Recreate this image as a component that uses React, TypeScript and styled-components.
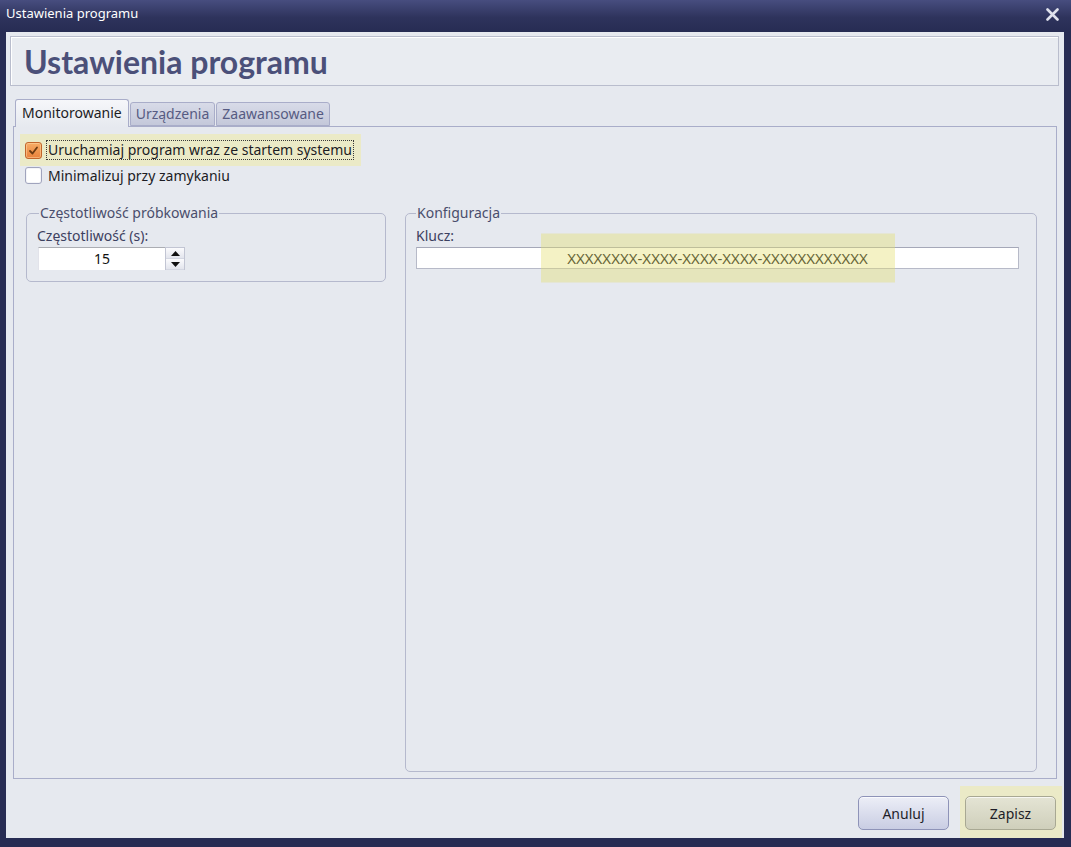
import styled, { createGlobalStyle } from "styled-components";

const GlobalStyle = createGlobalStyle`
  html, body {
    margin: 0;
    padding: 0;
  }
  body {
    font-family: "Noto Sans", "Open Sans", sans-serif;
    font-size: 14px;
    color: #1c1c24;
  }
`;

const Window = styled.div`
  width: 1071px;
  height: 847px;
  box-sizing: border-box;
  display: flex;
  flex-direction: column;
  background: #272c53;
  padding: 0 7px 9px 6px;
  overflow: hidden;
`;

const TitleBar = styled.div`
  height: 32px;
  margin: 0 -7px 0 -6px;
  padding: 4px 12px 0 6px;
  box-sizing: border-box;
  display: flex;
  justify-content: space-between;
  align-items: flex-start;
  background: linear-gradient(#474d7f, #2e335c 55%, #272c53);
  color: #ffffff;
  font-size: 13px;
  line-height: 18px;
`;

const CloseButton = styled.button`
  border: none;
  background: transparent;
  padding: 0;
  margin-top: 3px;
  width: 14px;
  height: 14px;
  display: grid;
  place-items: center;
`;

const Body = styled.div`
  flex: 1;
  display: flex;
  flex-direction: column;
  background: #e6e9ef;
`;

const Header = styled.div`
  margin: 4px 5px 0 4px;
  height: 50px;
  box-sizing: border-box;
  border: 1px solid #b9bdcd;
  background: #e9ecf1;
  box-shadow: inset 1px 1px 0 #ffffff;
  display: flex;
  align-items: center;
  padding-left: 13px;
`;

const HeaderTitle = styled.h1`
  margin: 0;
  font-family: Lato, "Noto Sans", sans-serif;
  font-weight: 700;
  font-size: 32px;
  line-height: 40px;
  color: #4b5079;
  margin-top: 2px;
`;

const TabStrip = styled.div`
  display: flex;
  align-items: flex-end;
  height: 28px;
  margin: 13px 0 -1px 9px;
  position: relative;
  z-index: 1;
`;

const Tab = styled.div<{ $active?: boolean }>`
  box-sizing: border-box;
  height: ${(p) => (p.$active ? "28px" : "24px")};
  margin-bottom: ${(p) => (p.$active ? "0" : "1px")};
  padding: 0 ${(p) => (p.$active ? "6px" : "5px")};
  border: 1px solid #a9adc9;
  border-bottom: ${(p) => (p.$active ? "none" : "1px solid #a9adc9")};
  border-radius: 3px 3px 0 0;
  margin-right: 1px;
  background: ${(p) =>
    p.$active
      ? "linear-gradient(#f6f7fa, #e6e9ef)"
      : "linear-gradient(#d8dbe8, #c4c8da)"};
  color: ${(p) => (p.$active ? "#1c1c24" : "#565b82")};
  font-size: 14px;
  line-height: ${(p) => (p.$active ? "26px" : "22px")};
`;

const Panel = styled.div`
  flex: 0 0 653px;
  box-sizing: border-box;
  margin: 0 7px;
  border: 1px solid #a9adc9;
  background: #e6e9ef;
  display: flex;
  flex-direction: column;
  padding: 7px 7px 6px 6px;
`;

const CheckRow = styled.label<{ $highlight?: boolean }>`
  display: inline-flex;
  align-items: center;
  align-self: flex-start;
  gap: 5px;
  white-space: nowrap;
  height: ${(p) => (p.$highlight ? "32px" : "17px")};
  padding: ${(p) => (p.$highlight ? "0 8px 0 5px" : "0 0 0 5px")};
  margin-top: ${(p) => (p.$highlight ? "0" : "1px")};
  background: ${(p) => (p.$highlight ? "#ebeac7" : "transparent")};
  box-sizing: border-box;
`;

const Box = styled.span<{ $checked?: boolean }>`
  flex: none;
  width: 17px;
  height: 17px;
  box-sizing: border-box;
  border-radius: 3px;
  display: grid;
  place-items: center;
  border: 1px solid ${(p) => (p.$checked ? "#c2652b" : "#a0a4bd")};
  background: ${(p) =>
    p.$checked ? "linear-gradient(#f7ad66, #e9813b)" : "#ffffff"};
  box-shadow: inset 0 0 0 1px
    ${(p) => (p.$checked ? "rgba(255,220,170,0.5)" : "#f4f5f8")};
`;

const CheckText = styled.span<{ $focused?: boolean }>`
  line-height: 18px;
  padding: 0 1px;
  outline: ${(p) => (p.$focused ? "1px dotted #3a3a3a" : "none")};
`;

const GroupRow = styled.div`
  flex: 1;
  display: flex;
  align-items: stretch;
  gap: 19px;
  margin-top: 19px;
  padding: 0 12px 0 6px;
`;

const Group = styled.fieldset<{ $width?: number; $grow?: boolean }>`
  margin: 0;
  min-width: 0;
  box-sizing: border-box;
  border: 1px solid #b5b9cd;
  border-radius: 5px;
  padding: 0 ${(p) => (p.$grow ? "17px" : "10px")} 11px 10px;
  width: ${(p) => (p.$width ? `${p.$width}px` : "auto")};
  flex: ${(p) => (p.$grow ? "1" : "none")};
  align-self: ${(p) => (p.$grow ? "stretch" : "flex-start")};
`;

const Legend = styled.legend<{ $shift?: number }>`
  padding: 0 1px;
  margin-left: ${(p) => p.$shift ?? 0}px;
  color: #4a4e6c;
  line-height: 20px;
`;

const FieldLabel = styled.div`
  line-height: 20px;
  margin-top: 3px;
  color: #3c4060;
`;

const Spinner = styled.div`
  display: flex;
  width: 147px;
  height: 23px;
  margin: 1px 0 0 1px;
`;

const SpinInput = styled.div`
  flex: 1;
  box-sizing: border-box;
  background: #ffffff;
  border-top: 1px solid #abadb3;
  border-left: 1px solid #e2e3ea;
  text-align: center;
  line-height: 22px;
  color: #111;
`;

const SpinButtons = styled.div`
  width: 20px;
  display: flex;
  flex-direction: column;
  border: 1px solid #c2c5d3;
  border-bottom: none;
  box-sizing: border-box;
  background: #f4f5f8;
`;

const SpinButton = styled.div`
  flex: 1;
  display: grid;
  place-items: center;
  background: linear-gradient(#fbfbfd, #e3e5ed);
  border-bottom: 1px solid #d4d7e2;
`;

const KeyWrap = styled.div`
  position: relative;
  margin-top: 1px;
`;

const KeyInput = styled.div`
  height: 22px;
  box-sizing: border-box;
  background: #ffffff;
  border: 1px solid #b7bac8;
  border-top-color: #a5a8b8;
  text-align: center;
  line-height: 20px;
  color: #111111;
  font-size: 15px;
`;

const KeyHighlight = styled.span`
  position: absolute;
  left: 50%;
  top: 50%;
  width: 354px;
  height: 49px;
  transform: translate(-50%, -50%);
  background: rgba(228, 222, 110, 0.4);
  pointer-events: none;
`;

const Footer = styled.div`
  flex: 1;
  display: flex;
  justify-content: flex-end;
  align-items: flex-end;
  gap: 11px;
  padding-right: 2px;
`;

const ButtonHighlight = styled.div`
  padding: 10px 6px 8px 5px;
  background: #ebeac7;
`;

const Button = styled.button<{ $variant?: "plain" | "accent" }>`
  width: 91px;
  height: 34px;
  border-radius: 5px;
  font-family: "Noto Sans", sans-serif;
  font-size: 14px;
  color: #1e1e28;
  margin-bottom: ${(p) => (p.$variant === "accent" ? "0" : "8px")};
  border: 1px solid
    ${(p) => (p.$variant === "accent" ? "#a8a893" : "#8e93b8")};
  background: ${(p) =>
    p.$variant === "accent"
      ? "linear-gradient(#e4e4d4, #cfcfbb)"
      : "linear-gradient(#eceef7, #c9cde3)"};
  box-shadow: inset 0 1px 0 rgba(255, 255, 255, 0.7);
`;

const Tick = () => (
  <svg width="11" height="11" viewBox="0 0 11 11">
    <path
      d="M2 6 L4.5 8.5 L9 2.5"
      fill="none"
      stroke="#6b3a12"
      strokeWidth="1.8"
      strokeLinecap="round"
      strokeLinejoin="round"
    />
  </svg>
);

const Arrow = ({ up }: { up?: boolean }) => (
  <svg width="9" height="5" viewBox="0 0 9 5">
    <path d={up ? "M0 5 L4.5 0 L9 5 Z" : "M0 0 L4.5 5 L9 0 Z"} fill="#111" />
  </svg>
);

const App = () => {
  return (
    <>
      <GlobalStyle />
      <Window>
        <TitleBar>
          <span>Ustawienia programu</span>
          <CloseButton aria-label="Zamknij">
            <svg width="13" height="13" viewBox="0 0 13 13">
              <path
                d="M1.5 1.5 L11.5 11.5 M11.5 1.5 L1.5 11.5"
                stroke="#dfe1ec"
                strokeWidth="2.6"
                strokeLinecap="round"
              />
            </svg>
          </CloseButton>
        </TitleBar>
        <Body>
          <Header>
            <HeaderTitle>Ustawienia programu</HeaderTitle>
          </Header>
          <TabStrip>
            <Tab $active>Monitorowanie</Tab>
            <Tab>Urządzenia</Tab>
            <Tab>Zaawansowane</Tab>
          </TabStrip>
          <Panel>
            <CheckRow $highlight>
              <Box $checked>
                <Tick />
              </Box>
              <CheckText $focused>
                Uruchamiaj program wraz ze startem systemu
              </CheckText>
            </CheckRow>
            <CheckRow>
              <Box />
              <CheckText>Minimalizuj przy zamykaniu</CheckText>
            </CheckRow>
            <GroupRow>
              <Group $width={360}>
                <Legend $shift={2}>Częstotliwość próbkowania</Legend>
                <FieldLabel>Częstotliwość (s):</FieldLabel>
                <Spinner>
                  <SpinInput>15</SpinInput>
                  <SpinButtons>
                    <SpinButton>
                      <Arrow up />
                    </SpinButton>
                    <SpinButton>
                      <Arrow />
                    </SpinButton>
                  </SpinButtons>
                </Spinner>
              </Group>
              <Group $grow>
                <Legend>Konfiguracja</Legend>
                <FieldLabel>Klucz:</FieldLabel>
                <KeyWrap>
                  <KeyInput>XXXXXXXX-XXXX-XXXX-XXXX-XXXXXXXXXXXX</KeyInput>
                  <KeyHighlight />
                </KeyWrap>
              </Group>
            </GroupRow>
          </Panel>
          <Footer>
            <Button $variant="plain">Anuluj</Button>
            <ButtonHighlight>
              <Button $variant="accent">Zapisz</Button>
            </ButtonHighlight>
          </Footer>
        </Body>
      </Window>
    </>
  );
};

export default App;
